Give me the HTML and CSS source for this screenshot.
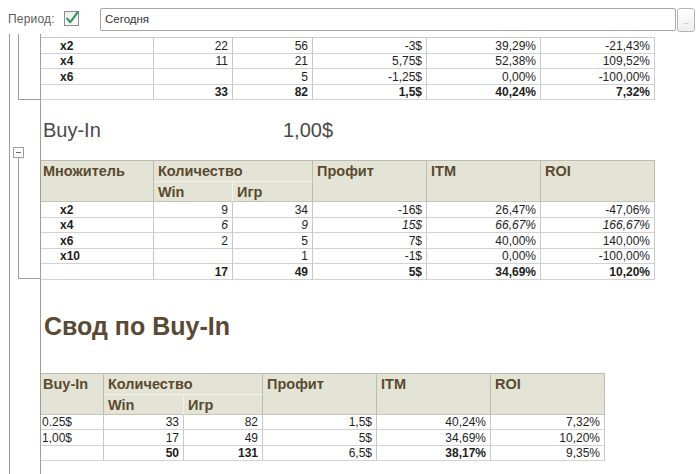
FILE: index.html
```html
<!DOCTYPE html>
<html lang="ru">
<head>
<meta charset="utf-8">
<title>Отчет по Buy-In</title>
<link rel="stylesheet" href="styles.css">
</head>
<body>
<div class="topbar">
  <span class="period-label">Период:</span>
  <svg class="checkbox" width="16" height="16" viewBox="0 0 16 16">
    <defs>
      <linearGradient id="cbg" x1="0" y1="0" x2="0" y2="1">
        <stop offset="0" stop-color="#ececec"/>
        <stop offset="1" stop-color="#ffffff"/>
      </linearGradient>
    </defs>
    <rect x="0.5" y="1.5" width="14" height="14" fill="url(#cbg)" stroke="#8c8c8c"/>
    <path d="M3.2 8.6 L6.3 12.2 L13.8 2.2" fill="none" stroke="#2f9a55" stroke-width="2.2" stroke-linecap="round" stroke-linejoin="round"/>
  </svg>
  <div class="field"><span class="field-text">Сегодня</span></div>
  <div class="field-btn">...</div>
</div>
<div class="report">
  <div class="gutter">
    <div class="grp grp1"></div>
    <div class="grp-gap"></div>
    <div class="collapse-box"></div>
    <div class="grp grp2"></div>
  </div>
  <div class="content">
    <table class="grid t-wide t-first">
      <colgroup><col class="c113"><col class="c79"><col class="c80"><col class="c114"><col class="c114"><col class="c114"></colgroup>
      <tbody>
        <tr><td class="lbl">x2</td><td class="num">22</td><td class="num">56</td><td class="num">-3$</td><td class="num">39,29%</td><td class="num">-21,43%</td></tr>
        <tr><td class="lbl">x4</td><td class="num">11</td><td class="num">21</td><td class="num">5,75$</td><td class="num">52,38%</td><td class="num">109,52%</td></tr>
        <tr><td class="lbl">x6</td><td class="num"></td><td class="num">5</td><td class="num">-1,25$</td><td class="num">0,00%</td><td class="num">-100,00%</td></tr>
        <tr class="tot"><td class="lbl"></td><td class="num">33</td><td class="num">82</td><td class="num">1,5$</td><td class="num">40,24%</td><td class="num">7,32%</td></tr>
      </tbody>
    </table>

    <div class="buyin">
      <span class="buyin-name">Buy-In</span>
      <span class="buyin-value">1,00$</span>
    </div>

    <table class="grid t-wide hdr">
      <colgroup><col class="c113"><col class="c79"><col class="c80"><col class="c114"><col class="c114"><col class="c114"></colgroup>
      <thead>
        <tr class="h1"><th rowspan="2" class="first">Множитель</th><th colspan="2" class="sub-b">Количество</th><th rowspan="2">Профит</th><th rowspan="2">ITM</th><th rowspan="2">ROI</th></tr>
        <tr class="h2"><th class="sub-r">Win</th><th>Игр</th></tr>
      </thead>
      <tbody>
        <tr><td class="lbl">x2</td><td class="num">9</td><td class="num">34</td><td class="num">-16$</td><td class="num">26,47%</td><td class="num">-47,06%</td></tr>
        <tr class="it"><td class="lbl">x4</td><td class="num">6</td><td class="num">9</td><td class="num">15$</td><td class="num">66,67%</td><td class="num">166,67%</td></tr>
        <tr><td class="lbl">x6</td><td class="num">2</td><td class="num">5</td><td class="num">7$</td><td class="num">40,00%</td><td class="num">140,00%</td></tr>
        <tr><td class="lbl">x10</td><td class="num"></td><td class="num">1</td><td class="num">-1$</td><td class="num">0,00%</td><td class="num">-100,00%</td></tr>
        <tr class="tot"><td class="lbl"></td><td class="num">17</td><td class="num">49</td><td class="num">5$</td><td class="num">34,69%</td><td class="num">10,20%</td></tr>
      </tbody>
    </table>

    <h2 class="svod">Свод по Buy-In</h2>

    <table class="grid t-narrow hdr">
      <colgroup><col class="c63"><col class="c80"><col class="c79"><col class="c114"><col class="c114"><col class="c114"></colgroup>
      <thead>
        <tr class="h1"><th rowspan="2" class="first">Buy-In</th><th colspan="2" class="sub-b">Количество</th><th rowspan="2">Профит</th><th rowspan="2">ITM</th><th rowspan="2">ROI</th></tr>
        <tr class="h2"><th class="sub-r">Win</th><th>Игр</th></tr>
      </thead>
      <tbody>
        <tr><td class="txt">0.25$</td><td class="num">33</td><td class="num">82</td><td class="num">1,5$</td><td class="num">40,24%</td><td class="num">7,32%</td></tr>
        <tr><td class="txt">1,00$</td><td class="num">17</td><td class="num">49</td><td class="num">5$</td><td class="num">34,69%</td><td class="num">10,20%</td></tr>
        <tr><td class="txt"></td><td class="num b">50</td><td class="num b">131</td><td class="num">6,5$</td><td class="num b">38,17%</td><td class="num">9,35%</td></tr>
      </tbody>
    </table>
  </div>
</div>
</body>
</html>
```

FILE: styles.css
```css
* { box-sizing: border-box; }
html, body { margin: 0; padding: 0; }
body {
  width: 700px;
  height: 474px;
  overflow: hidden;
  background: #ffffff;
  font-family: "Liberation Sans", Arial, sans-serif;
  color: #1e1e1e;
}

/* ---------- top bar ---------- */
.topbar {
  height: 34px;
  display: flex;
  align-items: flex-start;
  padding-top: 8px;
}
.period-label {
  width: 56px;
  margin-left: 8px;
  font-size: 12px;
  line-height: 22px;
  color: #5c5c5c;
  letter-spacing: 0.2px;
}
.checkbox {
  flex: none;
  margin-top: 2px;
  margin-right: 20px;
  overflow: visible;
}
.field {
  width: 576px;
  height: 23px;
  border: 1px solid #a8a8a8;
  border-radius: 2px;
  padding-left: 4px;
  font-size: 11.5px;
  line-height: 21px;
  color: #333333;
  background: #ffffff;
}
.field-btn {
  width: 18px;
  height: 24px;
  margin-left: 1px;
  border: 1px solid #b4b4b4;
  border-radius: 3px;
  background: linear-gradient(#ffffff, #efefef);
  color: #9a9a9a;
  font-size: 8px;
  line-height: 26px;
  text-align: center;
  letter-spacing: -0.5px;
}

/* ---------- report area ---------- */
.report {
  display: flex;
  height: 440px;
}
.gutter {
  flex: none;
  width: 31px;
  margin-left: 9px;
  border-left: 1px solid #9d9d9d;
}
.grp {
  margin-left: 8px;
  width: 22px;
  border-left: 1px solid #9d9d9d;
  border-bottom: 1px solid #9d9d9d;
}
.grp1 { height: 66px; }
.grp-gap { height: 47px; }
.collapse-box {
  margin-left: 3px;
  width: 11px;
  height: 11px;
  border: 1px solid #9d9d9d;
  display: flex;
  align-items: center;
  justify-content: center;
  background: #ffffff;
}
.collapse-box::before {
  content: "";
  width: 5px;
  height: 1px;
  background: #6a6a6a;
}
.grp2 { height: 121px; }

.content {
  flex: 1;
  border-left: 1px solid #9d9d9d;
}

/* ---------- tables ---------- */
.grid {
  border-collapse: separate;
  border-spacing: 0;
  table-layout: fixed;
  font-size: 12px;
}
.t-wide { width: 614px; }
.t-narrow { width: 564px; }
.t-first { margin-top: 3px; border-top: 1px solid #cacaca; }

.c63 { width: 63px; }
.c79 { width: 79px; }
.c80 { width: 80px; }
.c113 { width: 113px; }
.c114 { width: 114px; }

.grid tbody tr { height: 15.5px; }
.grid td {
  padding: 0 4px 0 3px;
  line-height: 14px;
  border-right: 1px solid #c9c9c9;
  border-bottom: 1px solid #d2d2d2;
  white-space: nowrap;
  overflow: hidden;
  vertical-align: bottom;
}
.grid td.num { text-align: right; }
.grid td.lbl { padding-left: 19px; font-weight: bold; text-align: left; }
.grid td.txt { padding-left: 1px; text-align: left; }
.grid tr.tot td { font-weight: bold; }
.grid tr.it td.num { font-style: italic; }
.grid td.b { font-weight: bold; }

.hdr { border-top: 1px solid #bcbcb0; }
.hdr thead tr.h1 { height: 21px; }
.hdr thead tr.h2 { height: 20px; }
.hdr th {
  background: #e3e4d5;
  color: #5a4a2f;
  font-size: 14.5px;
  font-weight: bold;
  line-height: 16px;
  text-align: left;
  vertical-align: top;
  padding: 2px 3px 0 4px;
  border-right: 1px solid #bcbcb0;
  border-bottom: 1px solid #c4c4b8;
  white-space: nowrap;
  overflow: hidden;
}
.hdr th.first { padding-left: 2px; }
.hdr th.sub-b { border-bottom-color: #f3f3ec; }
.hdr th.sub-r { border-right-color: #f3f3ec; }

/* ---------- headings ---------- */
.buyin {
  height: 60px;
  padding-top: 18px;
  display: flex;
  font-size: 20px;
  line-height: 24px;
  color: #4a4a4a;
}
.buyin-name { width: 242px; padding-left: 2px; }

.svod {
  margin: 31px 0 32px 0;
  padding-left: 3px;
  font-size: 25px;
  line-height: 30px;
  font-weight: bold;
  color: #5a4a34;
}
```
